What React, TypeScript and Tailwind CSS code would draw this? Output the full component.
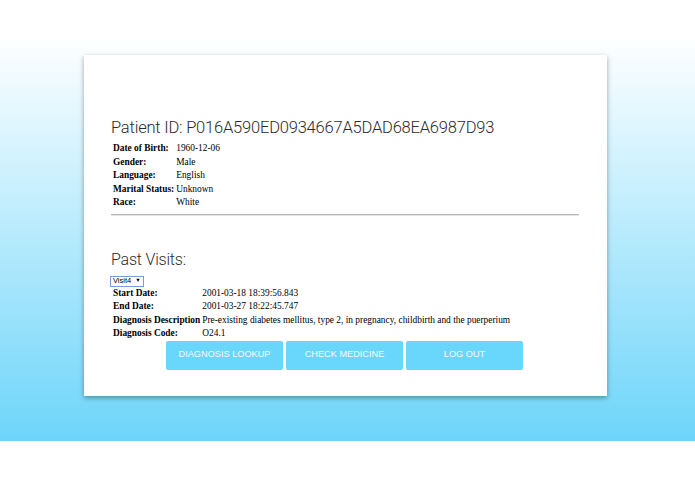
import React from 'react';

const patient: [string, string][] = [
  ['Date of Birth:', '1960-12-06'],
  ['Gender:', 'Male'],
  ['Language:', 'English'],
  ['Marital Status:', 'Unknown'],
  ['Race:', 'White'],
];

const visit: [string, string][] = [
  ['Start Date:', '2001-03-18 18:39:56.843'],
  ['End Date:', '2001-03-27 18:22:45.747'],
  ['Diagnosis Description', 'Pre-existing diabetes mellitus, type 2, in pregnancy, childbirth and the puerperium'],
  ['Diagnosis Code:', 'O24.1'],
];

const InfoTable = ({ rows }: { rows: [string, string][] }) => (
  <table className="border-separate border-spacing-0 font-['Liberation_Serif',serif] text-[9.4px] leading-[13.5px] text-black">
    <tbody>
      {rows.map(([k, v]) => (
        <tr key={k}>
          <td className="pl-[2px] pr-[2px] font-bold whitespace-nowrap align-top">{k}</td>
          <td className="whitespace-nowrap align-top">{v}</td>
        </tr>
      ))}
    </tbody>
  </table>
);

export default function App() {
  return (
    <div className="w-[695px] h-[494px] bg-white overflow-hidden">
      <section className="h-[441px] pt-[55px] bg-[linear-gradient(to_bottom,#ffffff_8%,#6dd5fa_100%)]">
        <div className="ml-[84px] w-[523px] h-[341px] bg-white shadow-[0_2px_5px_rgba(0,0,0,0.35)] pl-[27px] pr-[28px] pt-[63px]">
          <h1 className="font-['Roboto',sans-serif] font-light text-[16.5px] leading-[20px] text-[#2b2b2b] tracking-[-0.2px]">
            Patient ID: P016A590ED0934667A5DAD68EA6987D93
          </h1>
          <div className="mt-[4px]">
            <InfoTable rows={patient} />
          </div>
          <div className="mt-[4px] h-[2px] border-t border-[#b8b8b8] bg-[#e6e6e6]" />

          <h2 className="mt-[34px] font-['Roboto',sans-serif] font-light text-[16px] leading-[20px] text-[#2b2b2b] tracking-[-0.2px]">
            Past Visits:
          </h2>
          <div className="mt-[6px] flex -ml-[1px]">
            <div className="flex items-center gap-[4px] h-[11px] px-[2px] border border-[#7a9ad8] bg-white font-['Liberation_Sans',sans-serif] text-[7.5px] leading-none text-black">
              <span>Visit4</span>
              <span className="text-[5.5px]">▼</span>
            </div>
          </div>
          <InfoTable rows={visit} />
          <div className="flex justify-center gap-[3px] pr-[1px]">
            {['DIAGNOSIS LOOKUP', 'CHECK MEDICINE', 'LOG OUT'].map((b) => (
              <button
                key={b}
                className="w-[117px] h-[29px] rounded-[2px] bg-[#69d6fb] text-[#f4fcff] font-['Liberation_Sans',sans-serif] text-[9.2px]"
              >
                {b}
              </button>
            ))}
          </div>
        </div>
      </section>
    </div>
  );
}
